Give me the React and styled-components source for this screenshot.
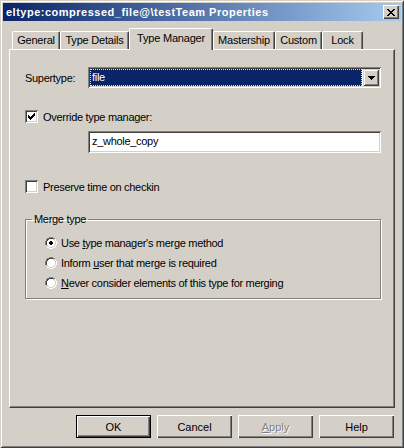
import React from 'react';
import styled, { createGlobalStyle } from 'styled-components';

const GlobalStyle = createGlobalStyle`
  html, body {
    margin: 0;
    padding: 0;
    background: #d4d0c8;
  }
  body {
    font-family: "Liberation Sans", Arial, sans-serif;
    font-size: 11px;
    color: #000;
  }
  * {
    box-sizing: border-box;
  }
`;

const Window = styled.div`
  width: 404px;
  height: 448px;
  padding: 3px;
  background: #d4d0c8;
  display: flex;
  flex-direction: column;
  box-shadow: inset 1px 1px #d4d0c8, inset -1px -1px #404040,
    inset 2px 2px #fff, inset -2px -2px #808080;
`;

const TitleBar = styled.div`
  height: 18px;
  display: flex;
  align-items: center;
  justify-content: space-between;
  padding: 0 2px 0 2px;
  background: linear-gradient(to right, #0a246a, #a6caf0);
`;

const TitleText = styled.span`
  color: #fff;
  font-weight: bold;
  font-size: 11px;
  letter-spacing: 0.5px;
  padding-left: 1px;
  white-space: nowrap;
`;

const CloseButton = styled.div`
  width: 16px;
  height: 14px;
  background: #d4d0c8;
  display: flex;
  align-items: center;
  justify-content: center;
  box-shadow: inset 1px 1px #fff, inset -1px -1px #404040,
    inset -2px -2px #808080;
`;

const Body = styled.div`
  flex: 1;
  display: flex;
  flex-direction: column;
  padding: 7px 6px 7px 6px;
`;

const TabStrip = styled.div`
  height: 21px;
  display: flex;
  align-items: flex-end;
  padding-left: 3px;
  position: relative;
  z-index: 1;
`;

const Tab = styled.div`
  width: ${(p) => p.$w}px;
  height: ${(p) => (p.$active ? 22 : 18)}px;
  margin-bottom: ${(p) => (p.$active ? -1 : 0)}px;
  padding-top: ${(p) => (p.$active ? 3 : 2)}px;
  text-align: center;
  white-space: nowrap;
  letter-spacing: -0.2px;
  background: #d4d0c8;
  border-top: 1px solid #fff;
  border-left: 1px solid #fff;
  border-right: 1px solid #404040;
  border-radius: 2px 2px 0 0;
  box-shadow: inset -1px 0 #808080;
`;

const Panel = styled.div`
  flex: 1;
  display: flex;
  flex-direction: column;
  padding: 17px 13px 0 15px;
  letter-spacing: -0.3px;
  border-top: 1px solid #fff;
  border-left: 1px solid #fff;
  border-right: 1px solid #404040;
  border-bottom: 1px solid #404040;
  box-shadow: inset -1px -1px #808080;
`;

const FieldRow = styled.div`
  display: flex;
  align-items: center;
  height: ${(p) => p.$h || 21}px;
  margin-top: ${(p) => p.$mt || 0}px;
  padding-left: ${(p) => p.$indent || 0}px;
`;

const FieldLabel = styled.span`
  width: 63px;
  flex-shrink: 0;
`;

const Sunken = styled.div`
  flex: 1;
  height: ${(p) => p.$h || 21}px;
  padding: 2px;
  background: #fff;
  display: flex;
  align-items: stretch;
  box-shadow: inset 1px 1px #808080, inset -1px -1px #fff,
    inset 2px 2px #404040, inset -2px -2px #d4d0c8;
`;

const ComboValue = styled.div`
  flex: 1;
  margin: 0 1px 0 0;
  background: #0a246a;
  color: #fff;
  border: 1px dotted #f5db95;
  padding-left: 1px;
  line-height: 15px;
`;

const ComboButton = styled.div`
  width: 16px;
  background: #d4d0c8;
  display: flex;
  align-items: center;
  justify-content: center;
  box-shadow: inset 1px 1px #d4d0c8, inset -1px -1px #404040,
    inset 2px 2px #fff, inset -2px -2px #808080;
`;

const TextValue = styled.div`
  padding-left: 2px;
  line-height: 17px;
`;

const CheckBox = styled.div`
  width: 13px;
  height: 13px;
  flex-shrink: 0;
  background: #fff;
  display: flex;
  align-items: center;
  justify-content: center;
  margin-right: 5px;
  box-shadow: inset 1px 1px #808080, inset -1px -1px #fff,
    inset 2px 2px #404040, inset -2px -2px #d4d0c8;
`;

const Group = styled.fieldset`
  margin: 20px 0 0 0;
  padding: 0;
  border: 1px solid #808080;
  box-shadow: inset 1px 1px #fff, 1px 1px #fff;
`;

const Legend = styled.legend`
  margin-left: 6px;
  padding: 0 2px;
  line-height: 13px;
`;

const RadioList = styled.div`
  display: flex;
  flex-direction: column;
  gap: 7px;
  padding: 10px 0 9px 19px;
`;

const RadioRow = styled.label`
  display: flex;
  align-items: center;
  height: 13px;
  gap: 4px;
`;

const Accel = styled.span`
  text-decoration: underline;
`;

const ButtonRow = styled.div`
  display: flex;
  justify-content: flex-end;
  gap: 6px;
  margin-top: 7px;
  padding-right: 1px;
`;

const Button = styled.div`
  width: 75px;
  height: 23px;
  display: flex;
  align-items: center;
  justify-content: center;
  background: #d4d0c8;
  color: ${(p) => (p.$disabled ? '#808080' : '#000')};
  text-shadow: ${(p) => (p.$disabled ? '1px 1px #fff' : 'none')};
  box-shadow: ${(p) =>
    p.$default
      ? 'inset 1px 1px #000, inset -1px -1px #000, inset 2px 2px #fff, inset -2px -2px #404040, inset -3px -3px #808080'
      : 'inset 1px 1px #fff, inset -1px -1px #404040, inset -2px -2px #808080'};
`;

const CloseIcon = () => (
  <svg width="8" height="7" viewBox="0 0 8 7" shapeRendering="crispEdges">
    <path
      d="M0 0h2v1h1v1h2V1h1V0h2v1H7v1H6v1H5v1h1v1h1v1h1v1H6V6H5V5H3v1H2v1H0V6h1V5h1V4h1V3H2V2H1V1H0z"
      fill="#000"
    />
  </svg>
);

const ArrowIcon = () => (
  <svg width="7" height="4" viewBox="0 0 7 4" shapeRendering="crispEdges">
    <path d="M0 0h7v1H6v1H5v1H4v1H3V3H2V2H1V1H0z" fill="#000" />
  </svg>
);

const CheckIcon = () => (
  <svg width="7" height="7" viewBox="0 0 7 7" shapeRendering="crispEdges">
    <path d="M6 0h1v3H6v1H5v1H4v1H3v1H2V6H1V5H0V2h1v1h1v1h1V3h1V2h1V1h1z" fill="#000" />
  </svg>
);

const RadioIcon = ({ checked }) => (
  <svg width="12" height="12" viewBox="0 0 12 12" shapeRendering="crispEdges">
    <path d="M4 0h4v1h2v1h-2V1H4v1H2v2H1v4H0V4h1V2h1V1h2z" fill="#808080" />
    <path d="M10 2h1v2h1v4h-1v2h-1v1H8v1H4v-1H2v-1h2v1h4v-1h2V8h1V4h-1z" fill="#fff" />
    <path d="M4 1h4v1H4v1H3v1H2v4H1V4h1V2h2z" fill="#404040" />
    <path d="M10 4h1v4h-1v2H8v1H4v-1h4V9h1V8h1z" fill="#d4d0c8" />
    <path d="M4 2h4v1h1v1h1v4H9v1H8v1H4V9H3V8H2V4h1V3h1z" fill="#fff" />
    {checked && <path d="M5 4h2v1h1v2H7v1H5V7H4V5h1z" fill="#000" />}
  </svg>
);

const tabs = [
  { label: 'General', w: 48 },
  { label: 'Type Details', w: 69 },
  { label: 'Type Manager', w: 84, active: true },
  { label: 'Mastership', w: 62 },
  { label: 'Custom', w: 47 },
  { label: 'Lock', w: 41 },
];

const App = () => {
  return (
    <>
      <GlobalStyle />
      <Window>
        <TitleBar>
          <TitleText>eltype:compressed_file@\testTeam Properties</TitleText>
          <CloseButton>
            <CloseIcon />
          </CloseButton>
        </TitleBar>
        <Body>
          <TabStrip>
            {tabs.map((t) => (
              <Tab key={t.label} $w={t.w} $active={t.active}>
                {t.label}
              </Tab>
            ))}
          </TabStrip>
          <Panel>
            <FieldRow>
              <FieldLabel>Supertype:</FieldLabel>
              <Sunken>
                <ComboValue>file</ComboValue>
                <ComboButton>
                  <ArrowIcon />
                </ComboButton>
              </Sunken>
            </FieldRow>
            <FieldRow $h={13} $mt={22}>
              <CheckBox>
                <CheckIcon />
              </CheckBox>
              <span>Override type manager:</span>
            </FieldRow>
            <FieldRow $h={22} $mt={8} $indent={63}>
              <Sunken $h={22}>
                <TextValue>z_whole_copy</TextValue>
              </Sunken>
            </FieldRow>
            <FieldRow $h={13} $mt={27}>
              <CheckBox />
              <span>Preserve time on checkin</span>
            </FieldRow>
            <Group>
              <Legend>Merge type</Legend>
              <RadioList>
                <RadioRow>
                  <RadioIcon checked />
                  <span>
                    Use <Accel>t</Accel>ype manager's merge method
                  </span>
                </RadioRow>
                <RadioRow>
                  <RadioIcon />
                  <span>
                    Inform <Accel>u</Accel>ser that merge is required
                  </span>
                </RadioRow>
                <RadioRow>
                  <RadioIcon />
                  <span>
                    <Accel>N</Accel>ever consider elements of this type for merging
                  </span>
                </RadioRow>
              </RadioList>
            </Group>
          </Panel>
          <ButtonRow>
            <Button $default>OK</Button>
            <Button>Cancel</Button>
            <Button $disabled>
              <span>
                <Accel>A</Accel>pply
              </span>
            </Button>
            <Button>Help</Button>
          </ButtonRow>
        </Body>
      </Window>
    </>
  );
};

export default App;
